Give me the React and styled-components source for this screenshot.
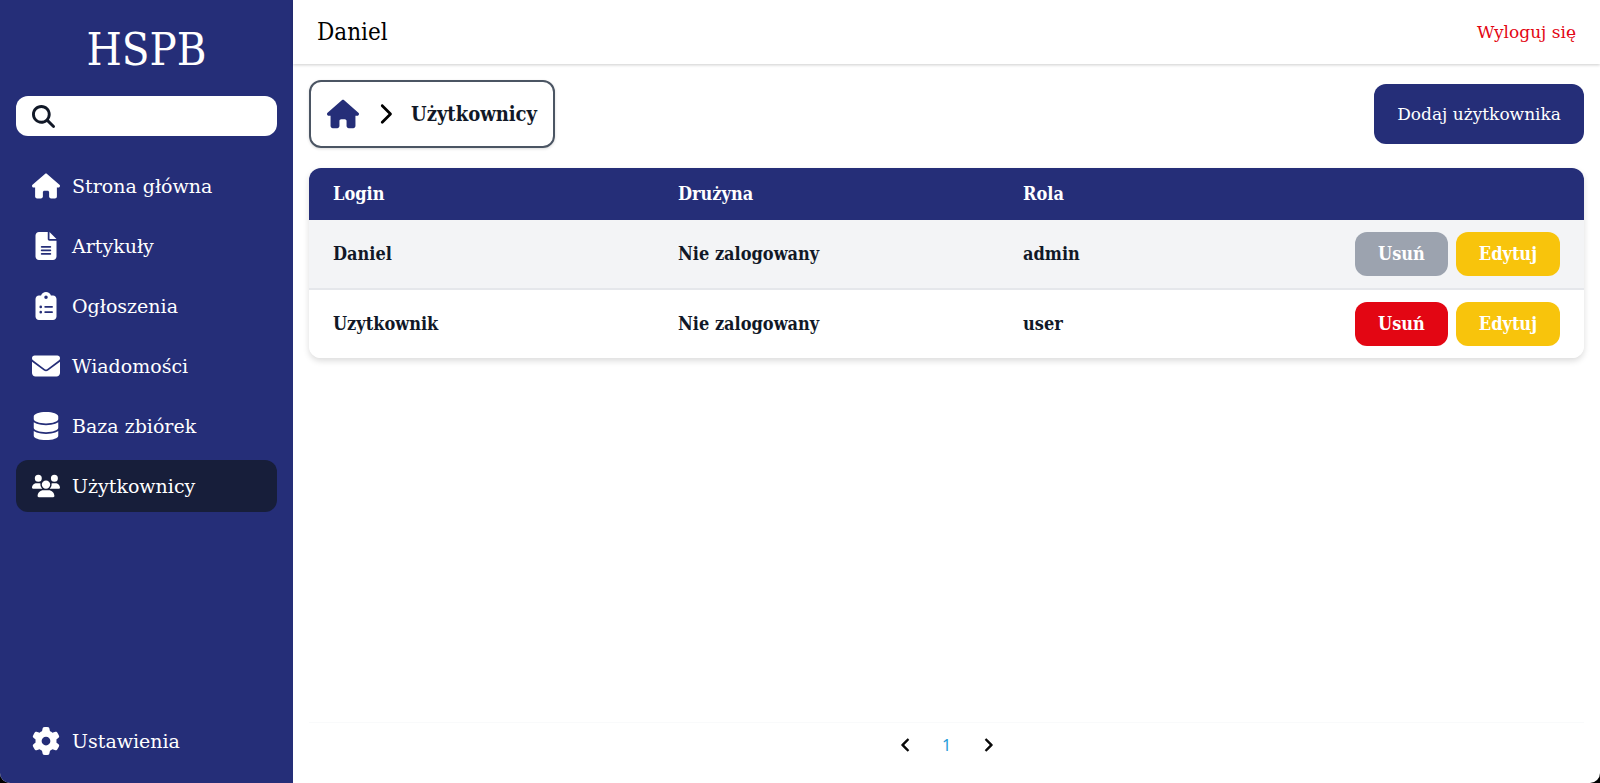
import React from 'react';
import styled, { createGlobalStyle, css } from 'styled-components';
import {
  FaHouse,
  FaFileLines,
  FaClipboardList,
  FaEnvelope,
  FaDatabase,
  FaUsers,
  FaGear,
  FaMagnifyingGlass,
  FaChevronLeft,
  FaChevronRight,
} from 'react-icons/fa6';

const navy = '#252e78';
const ink = '#111827';
const condensed = "'DejaVu Serif Condensed', 'DejaVu Serif', serif";

const GlobalStyle = createGlobalStyle`
  *, *::before, *::after { box-sizing: border-box; }
  body {
    margin: 0;
    background: #000;
    color: #000;
    font-family: 'DejaVu Serif', serif;
    font-size: 17px;
    line-height: 28px;
  }
  button, input { font: inherit; color: inherit; border: 0; margin: 0; padding: 0; background: none; }
  button { cursor: pointer; }
  a { color: inherit; text-decoration: none; }
  svg { display: block; flex: none; }
`;

const Shell = styled.div`
  display: flex;
  min-height: 100vh;
  overflow: hidden;
  border-radius: 0 0 10px 10px;
  background: #fff;
`;

const Sidebar = styled.aside`
  display: flex;
  flex-direction: column;
  flex: none;
  width: 293px;
  padding: 16px;
  background: ${navy};
  color: #fff;
`;

const Brand = styled.h1`
  margin: 10px 0 22px;
  font-family: ${condensed};
  font-size: 45px;
  font-weight: 400;
  line-height: 48px;
  text-align: center;
`;

const SearchBox = styled.label`
  display: flex;
  align-items: center;
  gap: 12px;
  height: 40px;
  padding: 0 16px;
  border-radius: 12px;
  background: #fff;
  color: ${ink};
`;

const SearchInput = styled.input`
  flex: 1;
  min-width: 0;
  outline: none;
`;

const Nav = styled.nav`
  display: flex;
  flex-direction: column;
  flex: 1;
  gap: 8px;
  margin-top: 24px;
`;

const NavLink = styled.a`
  display: flex;
  align-items: center;
  gap: 12px;
  height: 52px;
  padding: 0 16px;
  border-radius: 12px;
  font-size: 19px;
  ${(p) => p.$active && css`background: #171e3a;`}
  ${(p) => p.$last && css`margin-top: auto;`}
`;

const Main = styled.div`
  display: flex;
  flex-direction: column;
  flex: 1;
  min-width: 0;
`;

const Header = styled.header`
  display: flex;
  align-items: center;
  justify-content: space-between;
  height: 64px;
  padding: 0 24px;
  box-shadow: 0 1px 3px rgba(0, 0, 0, 0.2);
`;

const UserName = styled.span`
  font-family: ${condensed};
  font-size: 24px;
`;

const Logout = styled.button`
  color: #e30613;
`;

const Content = styled.main`
  display: flex;
  flex-direction: column;
  flex: 1;
  padding: 16px 16px 0;
`;

const Toolbar = styled.div`
  display: flex;
  align-items: center;
  justify-content: space-between;
  margin-bottom: 20px;
`;

const Breadcrumb = styled.nav`
  display: flex;
  align-items: center;
  gap: 15px;
  height: 68px;
  padding: 0 16px;
  border: 2px solid #4b5563;
  border-radius: 12px;
  box-shadow: 0 1px 3px rgba(0, 0, 0, 0.15);
`;

const HomeLink = styled.a`
  color: ${navy};
`;

const Crumb = styled.span`
  color: ${ink};
  font-family: ${condensed};
  font-size: 20px;
  font-weight: 700;
`;

const Button = styled.button`
  height: 44px;
  padding: 0 23px;
  border-radius: 12px;
  background: ${(p) => p.$color};
  color: #fff;
  font-family: ${condensed};
  font-size: 18px;
  font-weight: 700;
  white-space: nowrap;
`;

const AddButton = styled(Button)`
  height: 60px;
  font-family: inherit;
  font-size: 17px;
  font-weight: 400;
`;

const TableCard = styled.div`
  overflow: hidden;
  border-radius: 12px;
  box-shadow: 0 3px 6px rgba(0, 0, 0, 0.14);
`;

const Table = styled.table`
  width: 100%;
  table-layout: fixed;
  border-collapse: collapse;
  font-family: ${condensed};
  font-size: 18px;
  font-weight: 700;
`;

const HeadCell = styled.th`
  width: ${(p) => p.$width || 'auto'};
  height: 52px;
  padding: 12px 24px;
  background: ${navy};
  color: #fff;
  text-align: left;
`;

const Row = styled.tr`
  background: ${(p) => (p.$shaded ? '#f3f4f6' : '#fff')};
`;

const Cell = styled.td`
  padding: 12px 24px;
  color: ${ink};
  ${Row}:not(:last-child) & { border-bottom: 2px solid #e5e7eb; }
`;

const Actions = styled.div`
  display: flex;
  justify-content: flex-end;
  gap: 8px;
`;

const Pagination = styled.nav`
  display: flex;
  align-items: center;
  justify-content: center;
  gap: 16px;
  height: 61px;
  margin-top: auto;
  padding-bottom: 16px;
  border-top: 1px solid #f9fafb;
`;

const PageButton = styled.button`
  display: flex;
  align-items: center;
  justify-content: center;
  width: 25px;
  height: 32px;
  font-family: 'Noto Sans', sans-serif;
  font-size: 16px;
  color: ${(p) => (p.$current ? '#1d9bd8' : '#000')};
`;

const links = [
  { label: 'Strona główna', Icon: FaHouse },
  { label: 'Artykuły', Icon: FaFileLines },
  { label: 'Ogłoszenia', Icon: FaClipboardList },
  { label: 'Wiadomości', Icon: FaEnvelope },
  { label: 'Baza zbiórek', Icon: FaDatabase },
  { label: 'Użytkownicy', Icon: FaUsers, active: true },
  { label: 'Ustawienia', Icon: FaGear, last: true },
];

const users = [
  { login: 'Daniel', team: 'Nie zalogowany', role: 'admin', locked: true },
  { login: 'Uzytkownik', team: 'Nie zalogowany', role: 'user' },
];

export default function App() {
  return (
    <>
      <GlobalStyle />
      <Shell>
        <Sidebar>
          <Brand>HSPB</Brand>
          <SearchBox>
            <FaMagnifyingGlass size={23} />
            <SearchInput type="text" aria-label="Szukaj" />
          </SearchBox>
          <Nav>
            {links.map(({ label, Icon, active, last }) => (
              <NavLink key={label} href="#" $active={active} $last={last}>
                <Icon size={28} />
                {label}
              </NavLink>
            ))}
          </Nav>
        </Sidebar>
        <Main>
          <Header>
            <UserName>Daniel</UserName>
            <Logout type="button">Wyloguj się</Logout>
          </Header>
          <Content>
            <Toolbar>
              <Breadcrumb>
                <HomeLink href="#" aria-label="Strona główna">
                  <FaHouse size={32} />
                </HomeLink>
                <FaChevronRight size={22} />
                <Crumb>Użytkownicy</Crumb>
              </Breadcrumb>
              <AddButton type="button" $color={navy}>Dodaj użytkownika</AddButton>
            </Toolbar>
            <TableCard>
              <Table>
                <thead>
                  <tr>
                    <HeadCell>Login</HeadCell>
                    <HeadCell>Drużyna</HeadCell>
                    <HeadCell>Rola</HeadCell>
                    <HeadCell $width="240px" aria-label="Akcje" />
                  </tr>
                </thead>
                <tbody>
                  {users.map((user, i) => (
                    <Row key={user.login} $shaded={i % 2 === 0}>
                      <Cell>{user.login}</Cell>
                      <Cell>{user.team}</Cell>
                      <Cell>{user.role}</Cell>
                      <Cell>
                        <Actions>
                          <Button type="button" disabled={user.locked} $color={user.locked ? '#9ca3af' : '#e30613'}>Usuń</Button>
                          <Button type="button" $color="#f8c40c">Edytuj</Button>
                        </Actions>
                      </Cell>
                    </Row>
                  ))}
                </tbody>
              </Table>
            </TableCard>
            <Pagination>
              <PageButton type="button" aria-label="Poprzednia"><FaChevronLeft size={14} strokeWidth={30} /></PageButton>
              <PageButton type="button" $current>1</PageButton>
              <PageButton type="button" aria-label="Następna"><FaChevronRight size={14} strokeWidth={30} /></PageButton>
            </Pagination>
          </Content>
        </Main>
      </Shell>
    </>
  );
}
